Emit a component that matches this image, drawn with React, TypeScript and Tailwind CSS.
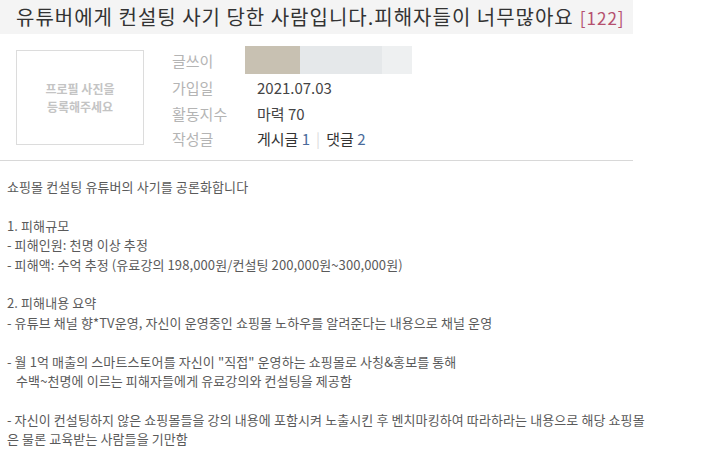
const font = { fontFamily: '"Noto Sans CJK KR", "Noto Sans", sans-serif' }

const BODY_LINES: string[] = [
  '쇼핑몰 컨설팅 유튜버의 사기를 공론화합니다',
  '',
  '1. 피해규모',
  '- 피해인원: 천명 이상 추정',
  '- 피해액: 수억 추정 (유료강의 198,000원/컨설팅 200,000원~300,000원)',
  '',
  '2. 피해내용 요약',
  '- 유튜브 채널 향*TV운영, 자신이 운영중인 쇼핑몰 노하우를 알려준다는 내용으로 채널 운영',
  '',
  '- 월 1억 매출의 스마트스토어를 자신이 "직접" 운영하는 쇼핑몰로 사칭&홍보를 통해',
  '   수백~천명에 이르는 피해자들에게 유료강의와 컨설팅을 제공함',
  '',
  '- 자신이 컨설팅하지 않은 쇼핑몰들을 강의 내용에 포함시켜 노출시킨 후 벤치마킹하여 따라하라는 내용으로 해당 쇼핑몰',
  '은 물론 교육받는 사람들을 기만함',
]

export default function App() {
  return (
    <div className="w-[720px] h-[457px] bg-white overflow-hidden" style={font}>
      {/* title bar */}
      <div className="w-[633px] h-[34px] bg-[#f4f4f4] flex items-center pl-[16px]">
        <h1 className="text-[20px] text-[#333] tracking-[1px] whitespace-nowrap">
          유튜버에게 컨설팅 사기 당한 사람입니다.피해자들이 너무많아요
          <span className="text-[#b5506e] text-[17px] ml-[6px]">[122]</span>
        </h1>
      </div>

      {/* author info */}
      <div className="w-[633px] h-[127px] border-b border-[#d8d8d8] flex pt-[16px] pl-[16px]">
        <div className="w-[128px] h-[95px] border border-[#dcdcdc] flex items-center justify-center">
          <p className="text-[12px] font-bold text-[#c4c4c4] text-center leading-[18px]">
            프로필 사진을<br />등록해주세요
          </p>
        </div>
        <div className="ml-[28px] -mt-[10px] text-[15px] leading-[25.5px]">
          <div className="flex h-[35px]">
            <span className="w-[73px] text-[#b4b4b4] pt-[8px]">글쓰이</span>
            <div className="flex mt-[6px] h-[28px]">
              <div className="w-[55px] bg-[#c8c1b2]" />
              <div className="w-[82px] bg-[#e5e8ea]" />
              <div className="w-[30px] bg-[#eef0f1]" />
            </div>
          </div>
          <div className="flex">
            <span className="w-[85px] text-[#b4b4b4]">가입일</span>
            <span className="text-[#444]">2021.07.03</span>
          </div>
          <div className="flex">
            <span className="w-[85px] text-[#b4b4b4]">활동지수</span>
            <span className="text-[#444]">마력 70</span>
          </div>
          <div className="flex">
            <span className="w-[85px] text-[#b4b4b4]">작성글</span>
            <span className="text-[#333]">
              게시글 <span className="text-[#4a6a9a]">1</span>
              <span className="text-[#ddd] mx-[6px]">|</span>
              댓글 <span className="text-[#4a6a9a]">2</span>
            </span>
          </div>
        </div>
      </div>

      {/* body */}
      <div className="pl-[7px] pt-[16px] text-[13px] leading-[19.4px] text-[#5a5a5a] tracking-[0.1px] whitespace-pre">
        {BODY_LINES.map((line, i) => (
          <div key={i} className="h-[19.4px]">{line}</div>
        ))}
      </div>
    </div>
  )
}
